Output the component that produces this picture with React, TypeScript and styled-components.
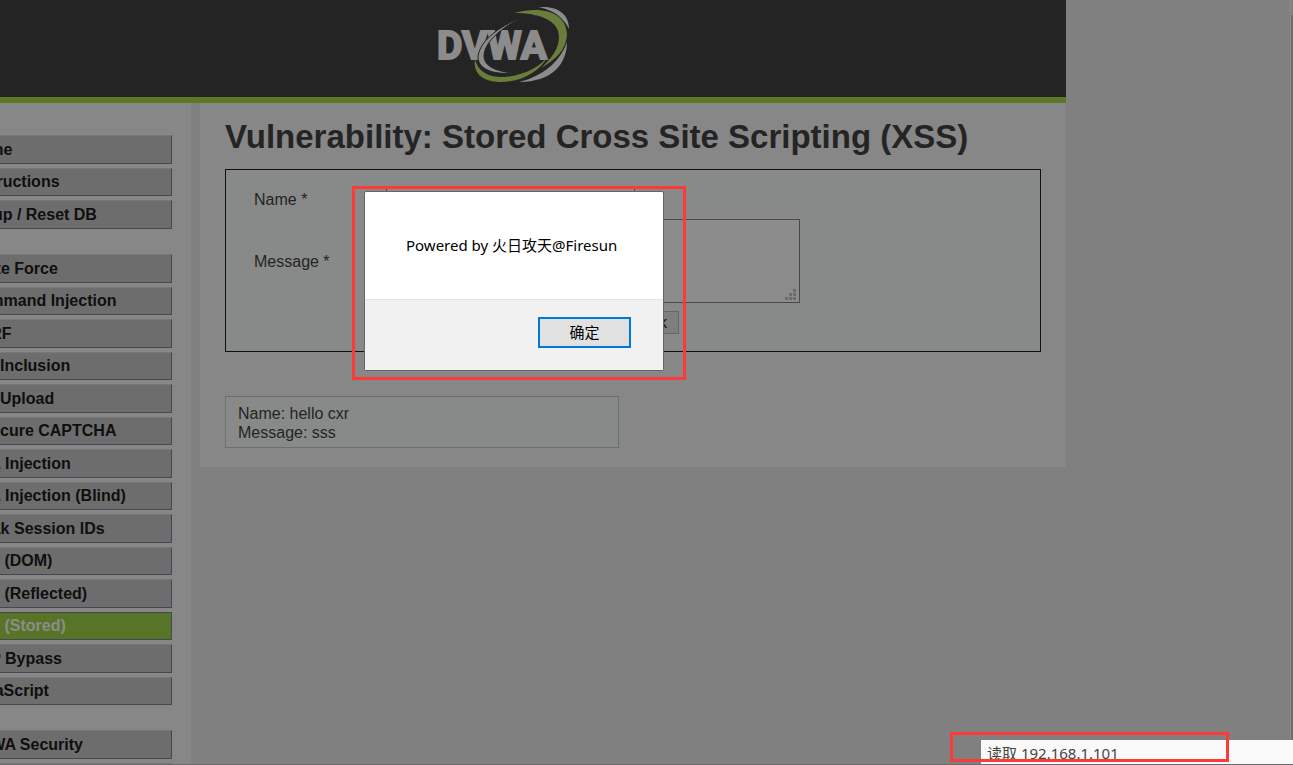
import React from "react";
import styled, { createGlobalStyle, css } from "styled-components";

const sans = '"Liberation Sans", Arial, sans-serif';
const ui = '"Noto Sans", "Noto Sans CJK SC", sans-serif';

const GlobalStyle = createGlobalStyle`
  *, *::before, *::after { box-sizing: border-box; }
  html, body { height: 100%; }
  body {
    margin: 0;
    overflow: hidden;
    background: #808080;
    color: #242424;
    font: 16px/19px ${sans};
  }
  #root { height: 100%; }
`;

const Viewport = styled.div`
  position: relative;
  height: 100%;
  overflow: hidden;
  border-bottom: 1px solid #6a6a6a;
`;

const Page = styled.div`
  margin: 0 227px 0 -60px;
`;

const Header = styled.header`
  display: flex;
  justify-content: center;
  height: 103px;
  padding-top: 5px;
  background: #242424;
  border-bottom: 6px solid #5e7627;
`;

const Columns = styled.div`
  display: flex;
  align-items: flex-start;
  gap: 9px;
`;

const Sidebar = styled.nav`
  display: flex;
  flex-direction: column;
  gap: 25px;
  flex: 0 0 251px;
  padding: 32px 19px 32px 20px;
  background: #878787;
`;

const MenuGroup = styled.ul<{ $height: number }>`
  display: grid;
  grid-auto-rows: 1fr;
  gap: 4px;
  height: ${(p) => p.$height}px;
  margin: 0;
  padding: 0;
  list-style: none;
`;

const MenuLink = styled.a<{ $active?: boolean }>`
  display: flex;
  align-items: center;
  height: 100%;
  padding-left: 7px;
  border: 1px solid #444855;
  border-top-color: #767878;
  background: #6d6d6d;
  color: #0f0f0f;
  font-weight: bold;
  text-decoration: none;
  ${(p) =>
    p.$active &&
    css`
      border-top-color: #444855;
      background: #587426;
      color: #8c8c8c;
    `}
`;

const Main = styled.main`
  flex: 1;
  min-width: 0;
  padding: 14px 25px 19px;
  background: #878787;
`;

const Title = styled.h1`
  margin: 0 0 12px;
  font-size: 33px;
  line-height: 40px;
  white-space: nowrap;
`;

const FormBox = styled.form`
  display: grid;
  grid-template-columns: 132px 1fr;
  align-items: center;
  row-gap: 8px;
  padding: 17px 28px;
  border: 1px solid #111;
  background: #878a88;
`;

const NameInput = styled.input`
  width: 249px;
  height: 24px;
  border: 1px solid #484848;
  background: #8c8c8c;
  font: inherit;
`;

const MessageCell = styled.div`
  position: relative;
  width: 414px;
  height: 84px;
`;

const MessageArea = styled.textarea`
  display: block;
  width: 100%;
  height: 100%;
  border: 1px solid #484848;
  background: #8c8c8c;
  font: inherit;
  resize: none;
`;

const Grip = styled.svg`
  position: absolute;
  right: 4px;
  bottom: 3px;
`;

const FormButtons = styled.div`
  display: flex;
  grid-column: 2;
  justify-content: space-between;
  width: 293px;
`;

const FormButton = styled.button`
  height: 23px;
  padding: 0 11px;
  border: 1px solid #666;
  background: #7e7e7e;
  color: #111;
  font: 16px/19px ${sans};
  white-space: nowrap;
`;

const Entry = styled.div`
  width: 394px;
  margin-top: 44px;
  padding: 7px 12px 5px;
  border: 1px solid #6b706e;
  background: #878a88;
`;

const AlertBox = styled.div`
  position: absolute;
  top: 191px;
  left: 364px;
  width: 300px;
  border: 1px solid #666;
  border-radius: 2px;
  background: #fff;
  color: #000;
  font: 15px/20px ${ui};
`;

const AlertText = styled.p`
  margin: 0;
  padding: 43px 41px 44px;
  white-space: nowrap;
`;

const AlertFooter = styled.div`
  display: flex;
  justify-content: flex-end;
  padding: 17px 32px 22px;
  border-top: 1px solid #e3e3e3;
  background: #f1f1f1;
`;

const AlertButton = styled.button`
  width: 93px;
  height: 31px;
  padding: 0 0 2px;
  border: 2px solid #0078d7;
  background: #e1e1e1;
  color: #000;
  font: 15px/20px ${ui};
`;

const StatusBar = styled.div`
  position: absolute;
  right: 0;
  bottom: 0;
  width: 312px;
  height: 24px;
  padding: 2px 6px;
  background: #f9f9f9;
  color: #444;
  font: 15px/22px ${ui};
`;

const Mark = styled.div<{ $area: "alert" | "status" }>`
  position: absolute;
  border: 3px solid #ff3838;
  pointer-events: none;
  ${(p) =>
    p.$area === "alert"
      ? css`
          top: 186px;
          left: 352px;
          width: 334px;
          height: 194px;
        `
      : css`
          right: 64px;
          bottom: 2px;
          width: 279px;
          height: 30px;
        `}
`;

const Scrollbar = styled.div`
  position: absolute;
  top: 0;
  right: 0;
  bottom: 0;
  width: 3px;
  padding-top: 15px;
  border-left: 1px solid #8b8b8b;
  &::after {
    content: "";
    display: block;
    height: 100%;
    background: #6e6e6e;
  }
`;

const groups = [
  { height: 94, items: ["Home", "Instructions", "Setup / Reset DB"] },
  {
    height: 451,
    items: [
      "Brute Force",
      "Command Injection",
      "CSRF",
      "File Inclusion",
      "File Upload",
      "Insecure CAPTCHA",
      "SQL Injection",
      "SQL Injection (Blind)",
      "Weak Session IDs",
      "XSS (DOM)",
      "XSS (Reflected)",
      "XSS (Stored)",
      "CSP Bypass",
      "JavaScript",
    ],
  },
  { height: 94, items: ["DVWA Security", "PHP Info", "About"] },
];

function Logo() {
  return (
    <svg width="136" height="82" viewBox="0 0 136 82" role="img" aria-label="DVWA">
      <path d="M104 2C122 1 134 8 134 24C129 14 121 6 104 2Z" fill="#8c8c8c" />
      <path d="M132 37C132 58 118 77 84 77C108 71 125 57 132 37Z" fill="#8c8c8c" />
      <text
        x="2"
        y="54"
        fill="#8c8c8c"
        stroke="#8c8c8c"
        strokeWidth="2"
        fontFamily="Roboto, sans-serif"
        fontSize="39"
        fontWeight="700"
      >
        DVWA
      </text>
      <path
        d="M94 10C66 19 44 36 43 52C43 64 58 70 78 68C60 66 49 61 49 51C49 37 68 20 94 10Z"
        fill="#8c8c8c"
        stroke="#242424"
        strokeWidth="1"
      />
      <path
        d="M79 8C108 0 132 8 132 30C131 44 122 54 106 63C117 53 124 43 124 32C124 15 104 8 79 8Z"
        fill="#6b7d3b"
      />
      <path d="M40 54C43 67 54 73 70 72C90 70 105 62 113 51C105 67 86 77 66 77C46 77 38 67 40 54Z" fill="#6b7d3b" />
    </svg>
  );
}

export default function App() {
  return (
    <Viewport>
      <GlobalStyle />
      <Page>
        <Header>
          <Logo />
        </Header>
        <Columns>
          <Sidebar>
            {groups.map((group) => (
              <MenuGroup key={group.items[0]} $height={group.height}>
                {group.items.map((item) => (
                  <li key={item}>
                    <MenuLink href="#" $active={item === "XSS (Stored)"}>
                      {item}
                    </MenuLink>
                  </li>
                ))}
              </MenuGroup>
            ))}
          </Sidebar>
          <Main>
            <Title>Vulnerability: Stored Cross Site Scripting (XSS)</Title>
            <FormBox onSubmit={(e) => e.preventDefault()}>
              <label htmlFor="name">Name *</label>
              <NameInput id="name" type="text" />
              <label htmlFor="message">Message *</label>
              <MessageCell>
                <MessageArea id="message" />
                <Grip width="11" height="11" fill="#6c6c6c" aria-hidden="true">
                  <path d="M8 0h3v3h-3zM4 4h3v3h-3zM8 4h3v3h-3zM0 8h3v3h-3zM4 8h3v3h-3zM8 8h3v3h-3z" />
                </Grip>
              </MessageCell>
              <FormButtons>
                <FormButton type="submit">Sign Guestbook</FormButton>
                <FormButton type="button">Clear Guestbook</FormButton>
              </FormButtons>
            </FormBox>
            <Entry>
              Name: hello cxr
              <br />
              Message: sss
            </Entry>
          </Main>
        </Columns>
      </Page>
      <Scrollbar />
      <AlertBox role="alertdialog" aria-describedby="alert-text">
        <AlertText id="alert-text">Powered by 火日攻天@Firesun</AlertText>
        <AlertFooter>
          <AlertButton type="button">确定</AlertButton>
        </AlertFooter>
      </AlertBox>
      <StatusBar role="status">读取 192.168.1.101</StatusBar>
      <Mark $area="alert" />
      <Mark $area="status" />
    </Viewport>
  );
}
